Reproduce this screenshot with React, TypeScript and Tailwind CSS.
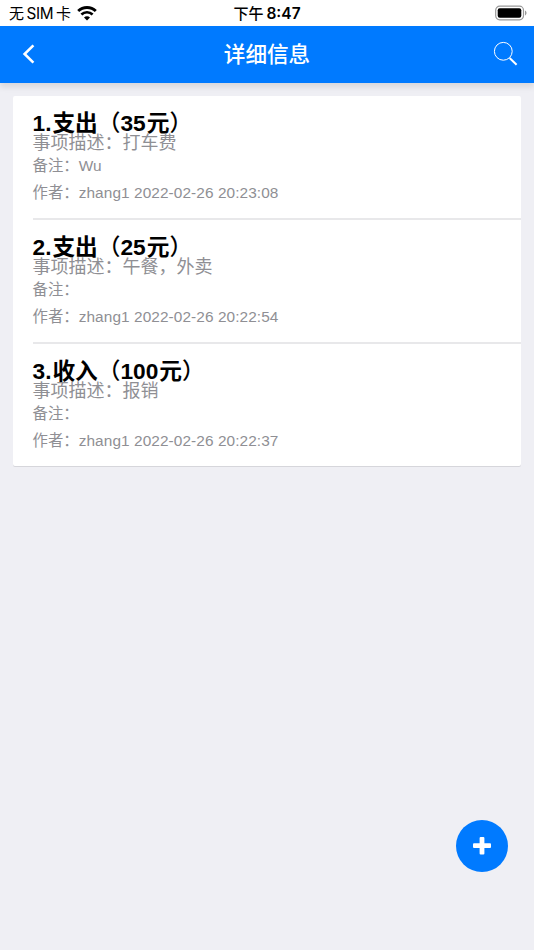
interface RecordItem {
    kind: string;
    amount: number;
    desc: string;
    note: string;
    time: string;
}

const records: RecordItem[] = [
    { kind: "支出", amount: 35, desc: "打车费", note: "Wu", time: "2022-02-26 20:23:08" },
    { kind: "支出", amount: 25, desc: "午餐，外卖", note: "", time: "2022-02-26 20:22:54" },
    { kind: "收入", amount: 100, desc: "报销", note: "", time: "2022-02-26 20:22:37" },
];

function StatusBar() {
    return (
        <div className="grid h-[26px] grid-cols-3 items-center bg-white pt-[2px] text-[16px] leading-[24px] text-black [font-family:Inter,'Noto_Sans_CJK_SC',sans-serif]">
            <div className="flex items-center pl-[9px] whitespace-nowrap">
                <span className="text-[15px]">无</span>
                <span className="ml-[2.5px] text-[15.3px] tracking-[-0.4px]">SIM</span>
                <span className="ml-[3px] text-[15px]">卡</span>
                <svg className="mb-[2px] ml-[6px]" width="20" height="15" viewBox="0 0 20 15" fill="none">
                    <path d="M1.2 5.1a12.5 12.5 0 0 1 17.6 0" stroke="#000" strokeWidth="2.8" />
                    <path d="M4.4 8.5a8 8 0 0 1 11.2 0" stroke="#000" strokeWidth="2.6" />
                    <path d="M10 14.5 7 11.6a4.2 4.2 0 0 1 6 0Z" fill="#000" />
                </svg>
            </div>
            <div className="flex justify-center gap-[3px] font-medium whitespace-nowrap">
                <span className="text-[15px]">下午</span>
                <span className="text-[15.5px] font-semibold">8:47</span>
            </div>
            <div className="flex justify-end pr-[7px] pb-[2px]">
                <svg width="32" height="16" viewBox="0 0 32 16">
                    <rect x="0.7" y="1.2" width="27.8" height="13.6" rx="4" fill="none" stroke="#999" strokeWidth="1.2" />
                    <rect x="2.7" y="3.2" width="23.6" height="9.6" rx="2" fill="#000" />
                    <path d="M30 5.6c2 .8 2 4 0 4.8Z" fill="#999" />
                </svg>
            </div>
        </div>
    );
}

function NavBar() {
    return (
        <header className="flex h-[57px] items-center justify-between bg-[#007aff] pr-[16px] pl-[22px] shadow-[0_4px_6px_rgba(0,0,0,0.1)]">
            <button type="button" aria-label="返回" className="pb-[2px]">
                <svg width="14" height="20" viewBox="0 0 14 20" fill="none">
                    <path d="M11.4 1.3 2.6 10l8.8 8.7" stroke="#fff" strokeWidth="2.6" />
                </svg>
            </button>
            <h1 className="pt-[2px] pl-[5px] text-[21.6px] font-medium text-white">详细信息</h1>
            <button type="button" aria-label="搜索" className="pb-[2px]">
                <svg width="25" height="25" viewBox="0 0 25 25" fill="none" stroke="#fff">
                    <circle cx="10.3" cy="10.3" r="8.9" strokeWidth="1" />
                    <path d="m16.6 17 7 6.7" strokeWidth="2" />
                </svg>
            </button>
        </header>
    );
}

function RecordRow({ item, index, last }: { item: RecordItem; index: number; last: boolean }) {
    return (
        <li className={`ml-[19.5px] flex flex-col pt-[17px] whitespace-nowrap text-[#8f8f94] ${last ? "h-[122px]" : "h-[124px] border-b-2 border-[#e8e8ea]"}`}>
            <h2 className="h-[20px] text-[22.7px] leading-[21px] font-bold text-black">
                {index + 1}.<span className="ml-[1px]">{item.kind}</span>
                <span className="font-medium">（</span>
                {item.amount}
                <span className="ml-[1px]">元</span>
                <span className="font-medium">）</span>
            </h2>
            <p className="h-[20px] text-[18px] leading-[21px]">事项描述：{item.desc}</p>
            <p className="text-[15.4px] leading-[25px]">备注：{item.note}</p>
            <p className="text-[15.4px] leading-[29px]">作者：<span className="tracking-[0.08px]">zhang1 {item.time}</span></p>
        </li>
    );
}

export default function App() {
    return (
        <div className="relative flex h-[950px] w-[534px] flex-col overflow-hidden bg-[#efeff4] [font-family:'Liberation_Sans','Noto_Sans_CJK_SC',sans-serif]">
            <StatusBar />
            <NavBar />
            <ul className="mx-[13px] mt-[13px] rounded-[2px] bg-white shadow-[0_1px_0_rgba(0,0,0,0.1)]">
                {records.map((item, i) => (
                    <RecordRow key={item.time} item={item} index={i} last={i === records.length - 1} />
                ))}
            </ul>
            <button
                type="button"
                aria-label="添加"
                className="absolute right-[26px] bottom-[78px] flex size-[52px] items-center justify-center rounded-full bg-[#007aff]">
                <svg width="18" height="18" viewBox="0 0 18 18" fill="#fff">
                    <rect x="6.6" y="0" width="4.8" height="17.4" rx="1" />
                    <rect x="0" y="6.2" width="18" height="4.8" rx="1" />
                </svg>
            </button>
        </div>
    );
}
